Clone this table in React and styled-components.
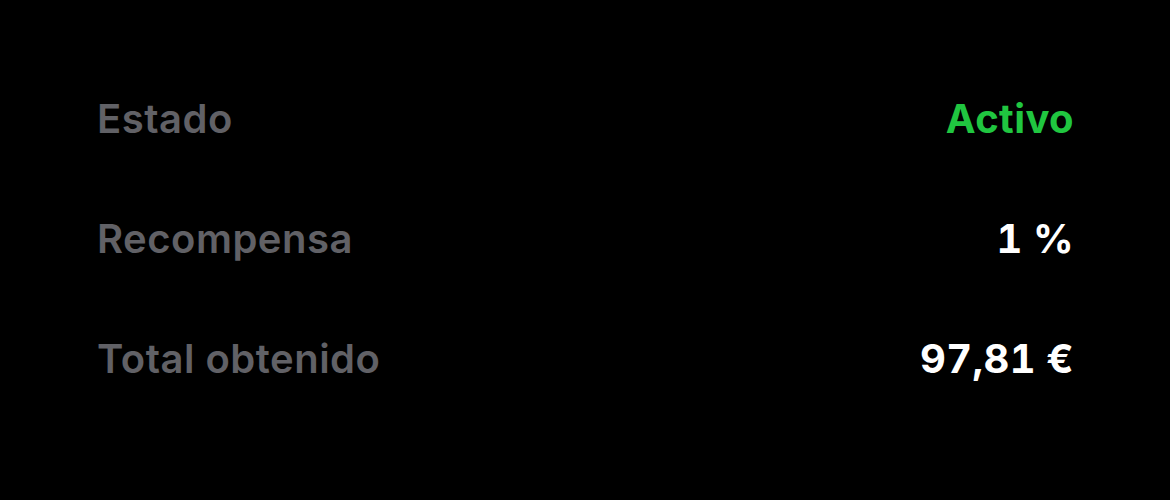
import React from "react";
import styled, { createGlobalStyle } from "styled-components";

const GlobalStyle = createGlobalStyle`
    html, body {
        margin: 0;
        padding: 0;
        background: #000000;
    }
    body {
        font-family: Inter, "Noto Sans", sans-serif;
        -webkit-font-smoothing: antialiased;
    }
`;

const rows = [
    { label: "Estado", value: "Activo", accent: true },
    { label: "Recompensa", value: "1 %" },
    { label: "Total obtenido", value: "97,81 €" },
];

export default function App() {
    return (
        <>
            <GlobalStyle />
            <Panel>
                {rows.map((row) => (
                    <Row key={row.label}>
                        <Label>{row.label}</Label>
                        <Value $accent={row.accent}>{row.value}</Value>
                    </Row>
                ))}
            </Panel>
        </>
    );
}

const Panel = styled.div`
    width: 1170px;
    height: 500px;
    box-sizing: border-box;
    padding: 58px 96px 82px 97px;
    background: #000000;
    display: flex;
    flex-direction: column;
`;

const Row = styled.div`
    height: 120px;
    display: flex;
    align-items: center;
    justify-content: space-between;
`;

const Label = styled.span`
    font-size: 40px;
    font-weight: 600;
    color: #616166;
    letter-spacing: 0.5px;
`;

const Value = styled.span`
    font-size: 40px;
    font-weight: 700;
    color: ${(p) => (p.$accent ? "#20c640" : "#ffffff")};
    letter-spacing: 0.4px;
    word-spacing: -1px;
    font-variant-numeric: tabular-nums;
`;
